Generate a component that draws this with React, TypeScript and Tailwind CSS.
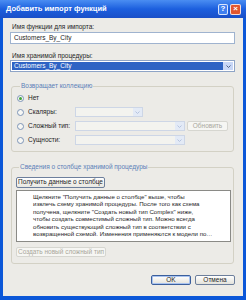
const font = { fontFamily: '"Liberation Sans", Arial, sans-serif' };

function Radio({ checked = false }: { checked?: boolean }) {
  return (
    <span className="flex h-[7px] w-[7px] shrink-0 items-center justify-center rounded-full border border-[#7d95b8] bg-[#f7f7f4]">
      {checked && <span className="h-[3px] w-[3px] rounded-full bg-[#3ea23a]" />}
    </span>
  );
}

function Chevron({ color }: { color: string }) {
  return (
    <svg width="5" height="3" viewBox="0 0 5 3">
      <path d="M0.5 0.5 L2.5 2.5 L4.5 0.5" fill="none" stroke={color} strokeWidth="1" />
    </svg>
  );
}

function DisabledCombo({ width }: { width: string }) {
  return (
    <div className={`flex h-[10px] ${width} items-stretch justify-end border border-[#cdd6e6] bg-[#f3f3ef]`}>
      <div className="flex w-[9px] items-center justify-center bg-[#e3eaf6]">
        <Chevron color="#b4c3df" />
      </div>
    </div>
  );
}

export default function App() {
  return (
    <div className="flex h-[300px] w-[246px] flex-col bg-[#0b57d8]" style={font}>
      {/* Title bar */}
      <div className="flex h-[18px] items-center justify-between bg-gradient-to-b from-[#4a8df2] via-[#1c5fde] to-[#1a4fc8] pl-[6px] pr-[5px]">
        <span className="text-[7.5px] font-bold leading-none text-white">
          Добавить импорт функций
        </span>
        <div className="flex gap-[2px]">
          <div className="flex h-[11px] w-[10px] items-center justify-center rounded-[2px] border border-white/80 bg-[#3f7ff0] text-[8px] font-bold leading-none text-white">
            ?
          </div>
          <div className="flex h-[11px] w-[11px] items-center justify-center rounded-[2px] border border-white/80 bg-[#e2562f] text-[8px] font-bold leading-none text-white">
            ×
          </div>
        </div>
      </div>

      {/* Body */}
      <div className="mx-[3px] mb-[4px] flex flex-1 flex-col bg-[#ecebe7] text-[6.5px] text-[#1e1e1e]">
        <div className="ml-[9px] mt-[5px] leading-[8px]">Имя функции для импорта:</div>
        <div className="ml-[7px] mt-[1px] flex h-[12px] w-[225px] items-center border border-[#9fb3cf] bg-white pl-[3px] leading-none">
          Customers_By_City
        </div>

        <div className="ml-[9px] mt-[8px] leading-[8px]">Имя хранимой процедуры:</div>
        <div className="ml-[7px] flex h-[12px] w-[225px] items-stretch border border-[#8ea4c6] bg-white p-[1px]">
          <div className="flex flex-1 items-center bg-[#2e63c4] pl-[2px] leading-none text-white">
            Customers_By_City
          </div>
          <div className="flex w-[10px] items-center justify-center bg-[#c8d7f7]">
            <Chevron color="#4d6185" />
          </div>
        </div>

        {/* Return collection group */}
        <fieldset className="ml-[8px] mt-[10px] w-[223px] rounded-[3px] border border-[#d3d1c5] pb-[6px] pl-[5px]">
          <legend className="ml-[3px] px-[1px] leading-[8px] text-[#5b7fb8]">Возвращает коллекцию</legend>
          <div className="mt-[4px] flex h-[8px] items-center gap-[4px]">
            <Radio checked />
            <span className="leading-none">Нет</span>
          </div>
          <div className="mt-[5px] flex h-[10px] items-center">
            <div className="flex w-[58px] items-center gap-[4px]">
              <Radio />
              <span className="leading-none">Скаляры:</span>
            </div>
            <DisabledCombo width="w-[68px]" />
          </div>
          <div className="mt-[4px] flex h-[10px] items-center">
            <div className="flex w-[58px] items-center gap-[4px]">
              <Radio />
              <span className="leading-none">Сложный тип:</span>
            </div>
            <DisabledCombo width="w-[110px]" />
            <div className="ml-[2px] flex h-[10px] w-[41px] items-center justify-center rounded-[2px] border border-[#d6d6d0] bg-[#f6f6f3] leading-none text-[#a9a79b]">
              Обновить
            </div>
          </div>
          <div className="mt-[4px] flex h-[10px] items-center">
            <div className="flex w-[58px] items-center gap-[4px]">
              <Radio />
              <span className="leading-none">Сущности:</span>
            </div>
            <DisabledCombo width="w-[110px]" />
          </div>
        </fieldset>

        {/* Column info group */}
        <fieldset className="ml-[8px] mt-[11px] w-[223px] rounded-[3px] border border-[#d3d1c5] pb-[6px] pl-[4px]">
          <legend className="ml-[3px] px-[1px] leading-[8px] text-[#5b7fb8]">
            Сведения о столбце хранимой процедуры
          </legend>
          <div className="mt-[6px] flex h-[11px] w-[89px] items-center justify-center rounded-[2px] border border-[#6d7f9c] bg-gradient-to-b from-white to-[#e8e7e0] leading-none">
            Получить данные о столбце
          </div>
          <div className="mt-[2px] h-[52px] w-[215px] border border-[#8a8a86] bg-white pl-[16px] pt-[2px] text-[6.1px] leading-[7.4px] whitespace-nowrap">
            <div>Щелкните "Получить данные о столбце" выше, чтобы</div>
            <div>извлечь схему хранимой процедуры. После того как схема</div>
            <div>получена, щелкните "Создать новый тип Complex" ниже,</div>
            <div>чтобы создать совместимый сложный тип. Можно всегда</div>
            <div>обновить существующий сложный тип в соответствии с</div>
            <div>возвращенной схемой. Изменения применяются к модели по…</div>
          </div>
          <div className="mt-[5px] flex h-[10px] w-[90px] items-center justify-center rounded-[2px] border border-[#d6d6d0] bg-[#f6f6f3] leading-none text-[#a9a79b]">
            Создать новый сложный тип
          </div>
        </fieldset>

        {/* Dialog buttons */}
        <div className="mt-[11px] flex justify-end gap-[4px] pr-[8px]">
          <div className="flex h-[10px] w-[40px] items-center justify-center rounded-[2px] border border-[#3b5f9c] bg-gradient-to-b from-white to-[#e3e2db] leading-none shadow-[inset_0_0_0_1px_#a9c3f0]">
            OK
          </div>
          <div className="flex h-[10px] w-[40px] items-center justify-center rounded-[2px] border border-[#6d7f9c] bg-gradient-to-b from-white to-[#e3e2db] leading-none">
            Отмена
          </div>
        </div>
      </div>
    </div>
  );
}
